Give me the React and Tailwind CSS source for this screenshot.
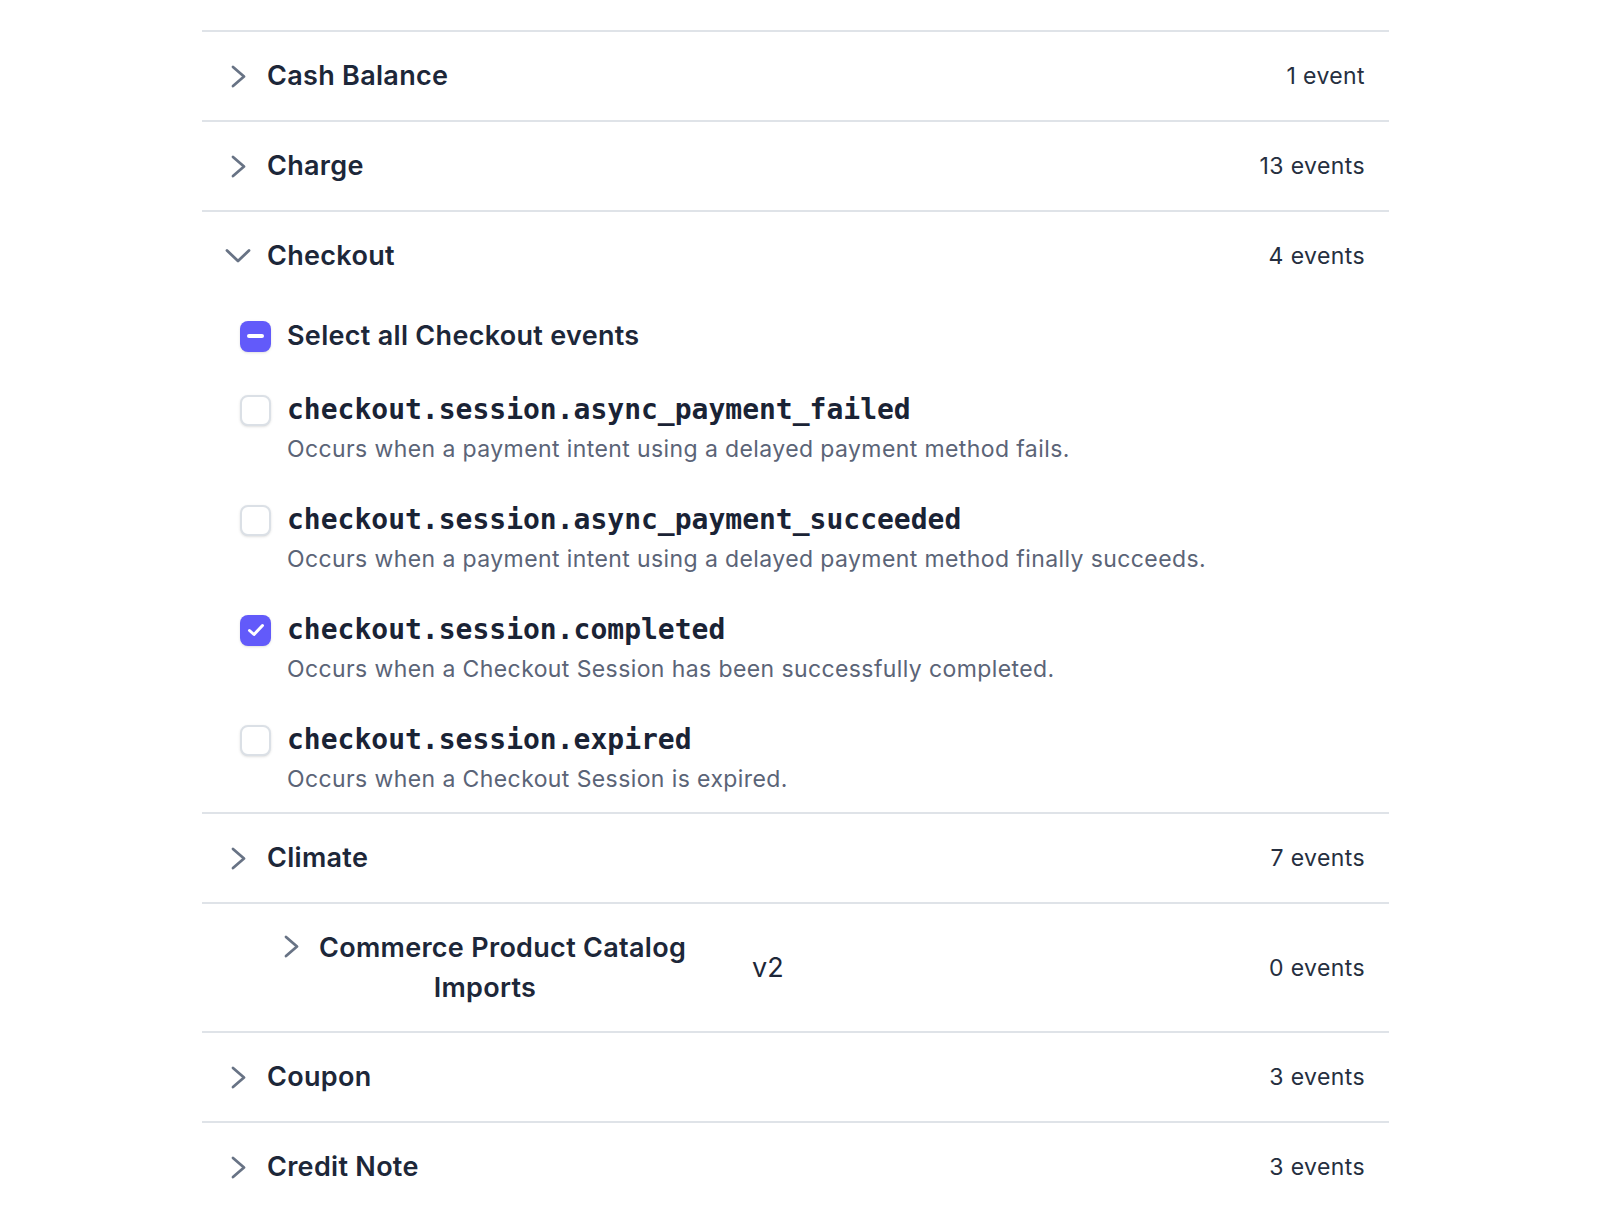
import React, { useState } from 'react';

const sans = { fontFamily: 'Inter, "Noto Sans", sans-serif' };

const groups = [
  { name: 'Cash Balance', count: '1 event' },
  { name: 'Charge', count: '13 events' },
  { name: 'Checkout', count: '4 events', open: true },
  { name: 'Climate', count: '7 events' },
  { name: 'Commerce Product Catalog', extra: 'Imports', count: '0 events', version: 'v2', nested: true },
  { name: 'Coupon', count: '3 events' },
  { name: 'Credit Note', count: '3 events' },
];

const checkoutEvents = [
  { id: 'checkout.session.async_payment_failed', desc: 'Occurs when a payment intent using a delayed payment method fails.' },
  { id: 'checkout.session.async_payment_succeeded', desc: 'Occurs when a payment intent using a delayed payment method finally succeeds.' },
  { id: 'checkout.session.completed', desc: 'Occurs when a Checkout Session has been successfully completed.', checked: true },
  { id: 'checkout.session.expired', desc: 'Occurs when a Checkout Session is expired.' },
];

const ChevronRight = () => (
  <svg width="17" height="23" viewBox="0 0 17 23" fill="none">
    <path d="M3 2 L14 11.5 L3 21" stroke="#687385" strokeWidth="2.8" strokeLinecap="round" strokeLinejoin="round" />
  </svg>
);

const ChevronDown = () => (
  <svg width="26" height="16" viewBox="0 0 26 16" fill="none">
    <path d="M2 2.5 L13 13 L24 2.5" stroke="#687385" strokeWidth="2.8" strokeLinecap="round" strokeLinejoin="round" />
  </svg>
);

const Checkbox = ({ state }) => {
  if (state === 'mixed') {
    return (
      <div className="w-[31px] h-[31px] rounded-[8px] bg-[#625afa] flex items-center justify-center shrink-0 shadow-sm">
        <div className="w-[17px] h-[4px] rounded-full bg-white" />
      </div>
    );
  }
  if (state === 'checked') {
    return (
      <div className="w-[31px] h-[31px] rounded-[8px] bg-[#625afa] flex items-center justify-center shrink-0 shadow-sm">
        <svg width="18" height="14" viewBox="0 0 18 14" fill="none">
          <path d="M2.5 7.5 L7 11.5 L15.5 2.5" stroke="white" strokeWidth="3" strokeLinecap="round" strokeLinejoin="round" />
        </svg>
      </div>
    );
  }
  return <div className="w-[31px] h-[31px] rounded-[8px] bg-white border-2 border-[#dbe0e6] shrink-0 shadow-sm" />;
};

const GroupHeader = ({ group }) => {
  if (group.nested) {
    return (
      <div className="flex items-center pt-[24px] pb-[23px] pl-[76px] pr-[24px]">
        <div className="w-[26px] flex justify-center self-start mt-[7px]">
          <ChevronRight />
        </div>
        <div className="w-[332px] ml-[15px] text-center text-[27px] tracking-[0.3px] leading-[40px] font-semibold text-[#1d2739]">
          <span className="whitespace-nowrap">{group.name}</span> {group.extra}
        </div>
        <div className="ml-[101px] text-[27px] leading-[40px] text-[#1d2739]">{group.version}</div>
        <div className="ml-auto text-[23px] tracking-[0.4px] text-[#262f40]">{group.count}</div>
      </div>
    );
  }
  return (
    <div className="flex items-center h-[88px] pl-[23px] pr-[24px]">
      <div className="w-[26px] flex justify-center">
        {group.open ? <ChevronDown /> : <ChevronRight />}
      </div>
      <div className="ml-[16px] text-[27px] tracking-[0.3px] font-semibold text-[#1d2739]">{group.name}</div>
      <div className="ml-auto text-[23px] tracking-[0.4px] text-[#262f40]">{group.count}</div>
    </div>
  );
};

const EventRow = ({ ev }) => (
  <div className="flex mt-[38px] first:mt-[40px]">
    <div className="h-[36px] flex items-center">
      <Checkbox state={ev.checked ? 'checked' : 'unchecked'} />
    </div>
    <div className="ml-[16px]">
      <div
        className="h-[36px] leading-[36px] text-[28px] font-bold text-[#1a2335]"
        style={{ fontFamily: '"DejaVu Sans Mono", "Liberation Mono", monospace' }}
      >
        {ev.id}
      </div>
      <div className="mt-[6px] text-[23px] tracking-[0.4px] leading-[30px] text-[#5b6477]">{ev.desc}</div>
    </div>
  </div>
);

export default function App() {
  const [openGroup] = useState('Checkout');

  return (
    <div className="min-h-screen bg-white pt-[30px]" style={sans}>
      <div className="ml-[202px] w-[1187px]">
        {groups.map((g) => (
          <div key={g.name} className="border-t-2 border-[#dfe3e8]">
            <GroupHeader group={g} />
            {g.name === openGroup && (
              <div className="pl-[38px] pb-[18px]">
                <div className="flex items-center mt-[20px] h-[32px]">
                  <Checkbox state="mixed" />
                  <span className="ml-[16px] text-[27px] tracking-[0.3px] font-semibold text-[#1d2739]">
                    Select all Checkout events
                  </span>
                </div>
                <div className="flex flex-col">
                  {checkoutEvents.map((ev) => (
                    <EventRow key={ev.id} ev={ev} />
                  ))}
                </div>
              </div>
            )}
          </div>
        ))}
      </div>
    </div>
  );
}
